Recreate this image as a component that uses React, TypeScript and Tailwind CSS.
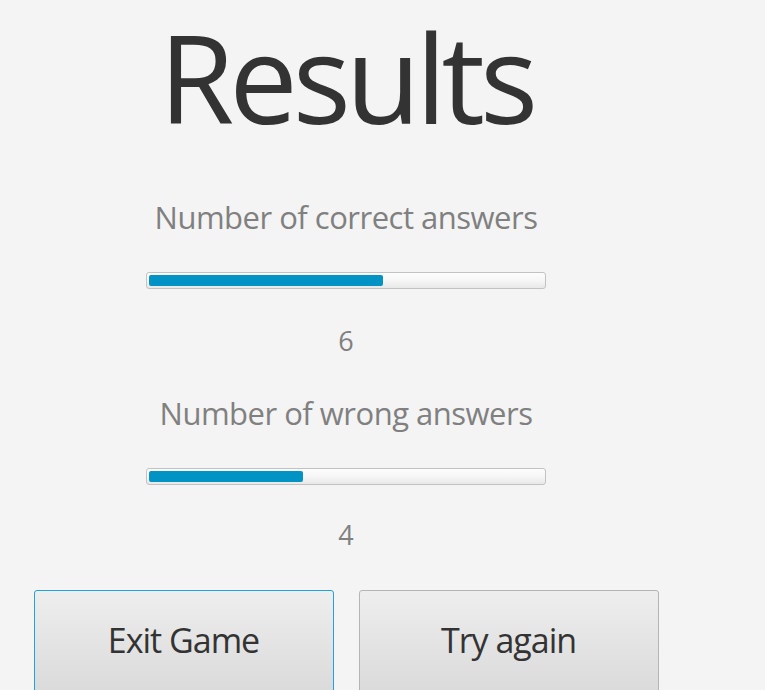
export default function App() {
  const font = { fontFamily: '"Open Sans", "Noto Sans", sans-serif' };
  const Bar = ({ pct }: { pct: number }) => (
    <div className="w-[400px] h-[17px] rounded-[3px] border border-[#c2c2c2] bg-gradient-to-b from-[#fdfdfd] via-[#f6f6f6] to-[#e8e8e8] p-[2px]">
      <div className="h-full rounded-[2px] bg-[#0093c4]" style={{ width: `${pct}%` }} />
    </div>
  );
  return (
    <div className="w-[765px] h-[690px] bg-[#f4f4f4] overflow-hidden" style={font}>
      <div className="w-[692px] flex flex-col items-center">
        <div className="h-[192px] text-[122px] leading-[154px] text-[#333333] tracking-[-5px] px-[8px]">Results</div>
        <div className="h-[50px] text-[31px] leading-[50px] text-[#808080] tracking-[-0.5px]">Number of correct answers</div>
        <div className="mt-[30px]"><Bar pct={59.4} /></div>
        <div className="mt-[32px] h-[40px] text-[27px] leading-[40px] text-[#808080]">6</div>
        <div className="mt-[27px] h-[50px] text-[31px] leading-[50px] text-[#808080] tracking-[-0.5px]">Number of wrong answers</div>
        <div className="mt-[30px]"><Bar pct={39} /></div>
        <div className="mt-[30px] h-[40px] text-[27px] leading-[40px] text-[#808080]">4</div>
        <div className="mt-[35px] flex gap-[25px]">
          <button className="w-[300px] h-[110px] rounded-[3px] border border-[#1ea4dc] bg-gradient-to-b from-[#eeeeee] to-[#d9d9d9] text-[34px] text-[#333333] tracking-[-1px] pb-[10px]">Exit Game</button>
          <button className="w-[300px] h-[110px] rounded-[3px] border border-[#b5b5b5] bg-gradient-to-b from-[#eeeeee] to-[#d9d9d9] text-[34px] text-[#333333] tracking-[-1px] pb-[10px]">Try again</button>
        </div>
      </div>
    </div>
  );
}
